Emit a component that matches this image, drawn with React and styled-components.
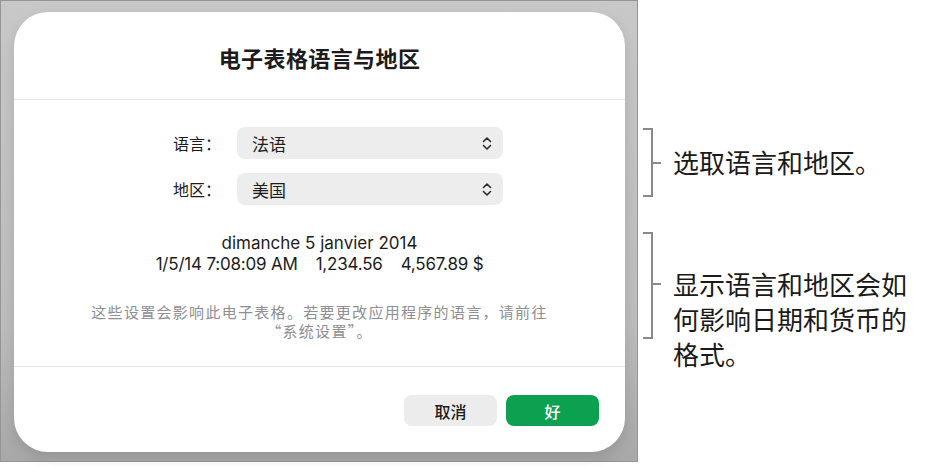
import React from "react";
import styled, { createGlobalStyle } from "styled-components";

const Global = createGlobalStyle`
  html, body { margin: 0; padding: 0; background: #ffffff; }
  body { font-family: Inter, "Noto Sans CJK SC", sans-serif; color: #1c1c1e; }
  * { box-sizing: border-box; }
`;

const Page = styled.div`
  display: flex;
  width: 934px;
  height: 466px;
  align-items: flex-start;
`;

const Frame = styled.div`
  width: 638px;
  height: 462px;
  border: 1px solid #959595;
  background: linear-gradient(180deg, #c8c8c8 0%, #bdbdbd 70%, #a8a8a8 100%);
  padding: 11px 0 0 13px;
`;

const Dialog = styled.div`
  width: 611px;
  height: 440px;
  background: #ffffff;
  border-radius: 34px;
  box-shadow: 0 6px 14px rgba(0, 0, 0, 0.12);
  display: flex;
  flex-direction: column;
`;

const Header = styled.div`
  height: 88px;
  display: flex;
  align-items: center;
  justify-content: center;
  border-bottom: 1px solid #e6e6e6;
  padding-top: 2px;
`;

const Title = styled.h1`
  margin: 0;
  font-family: "Noto Sans CJK SC", sans-serif;
  font-size: 22px;
  font-weight: 700;
  letter-spacing: 0.4px;
  color: #1c1c1e;
`;

const Body = styled.div`
  flex: 1;
  border-bottom: 1px solid #e6e6e6;
  display: flex;
  flex-direction: column;
  align-items: stretch;
  padding-top: 27px;
`;

const Form = styled.div`
  display: grid;
  grid-template-columns: 207px 266px;
  column-gap: 16px;
  row-gap: 14px;
  align-items: center;
`;

const Label = styled.div`
  text-align: right;
  font-family: "Noto Sans CJK SC", sans-serif;
  font-size: 16px;
  color: #1c1c1e;
`;

const Select = styled.div`
  height: 32px;
  border-radius: 8px;
  background: #ededed;
  display: flex;
  align-items: center;
  justify-content: space-between;
  padding: 0 11px 0 15px;
  font-family: "Noto Sans CJK SC", sans-serif;
  font-size: 17px;
  color: #1c1c1e;
`;

const Preview = styled.div`
  margin-top: 28px;
  display: flex;
  flex-direction: column;
  align-items: center;
  font-family: Inter, "Noto Sans CJK SC", sans-serif;
  font-size: 17px;
  line-height: 21px;
  color: #1c1c1e;
`;

const PreviewRow = styled.div`
  display: flex;
  gap: 18px;
  letter-spacing: -0.2px;
`;

const Note = styled.p`
  margin: 27px 0 0;
  text-align: center;
  font-family: "Noto Sans CJK SC", sans-serif;
  font-size: 15px;
  line-height: 19px;
  letter-spacing: 1.3px;
  color: #8e8e93;
`;

const Footer = styled.div`
  height: 85px;
  display: flex;
  justify-content: flex-end;
  align-items: flex-start;
  gap: 9px;
  padding: 28px 26px 0 0;
`;

const Button = styled.button`
  width: 93px;
  height: 31px;
  border: none;
  border-radius: 8px;
  font-family: "Noto Sans CJK SC", sans-serif;
  font-size: 16px;
  font-weight: 500;
  background: ${(p) => (p.$primary ? "#0ba150" : "#ececec")};
  color: ${(p) => (p.$primary ? "#ffffff" : "#1c1c1e")};
  display: flex;
  align-items: center;
  justify-content: center;
  padding: 0;
`;

const Callouts = styled.div`
  display: flex;
  flex-direction: column;
  padding: 128px 0 0 5px;
  gap: 35px;
`;

const Callout = styled.div`
  display: flex;
  align-items: flex-start;
`;

const Bracket = styled.div`
  position: relative;
  width: 10px;
  height: ${(p) => p.$h}px;
  border: 2px solid #8a8a8a;
  border-left: none;
  flex-shrink: 0;
  &::after {
    content: "";
    position: absolute;
    left: 8px;
    top: ${(p) => p.$tick}px;
    width: 10px;
    height: 2px;
    background: #8a8a8a;
  }
`;

const CalloutText = styled.div`
  margin-left: 20px;
  margin-top: ${(p) => p.$top}px;
  font-family: "Noto Sans CJK SC", sans-serif;
  font-size: 26px;
  line-height: 35px;
  color: #1a1a1a;
  width: 250px;
`;

const Chevrons = () => (
  <svg width="10" height="15" viewBox="0 0 10 15" fill="none">
    <path d="M1.5 5.5 L5 2 L8.5 5.5" stroke="#2b2b2b" strokeWidth="1.6" strokeLinecap="round" strokeLinejoin="round" />
    <path d="M1.5 9.5 L5 13 L8.5 9.5" stroke="#2b2b2b" strokeWidth="1.6" strokeLinecap="round" strokeLinejoin="round" />
  </svg>
);

export default function App() {
  return (
    <>
      <Global />
      <Page>
        <Frame>
          <Dialog>
            <Header>
              <Title>电子表格语言与地区</Title>
            </Header>
            <Body>
              <Form>
                <Label>语言：</Label>
                <Select>
                  <span>法语</span>
                  <Chevrons />
                </Select>
                <Label>地区：</Label>
                <Select>
                  <span>美国</span>
                  <Chevrons />
                </Select>
              </Form>
              <Preview>
                <div>dimanche 5 janvier 2014</div>
                <PreviewRow>
                  <span>1/5/14 7:08:09 AM</span>
                  <span>1,234.56</span>
                  <span>4,567.89 $</span>
                </PreviewRow>
              </Preview>
              <Note>
                这些设置会影响此电子表格。若要更改应用程序的语言，请前往
                <br />
                “系统设置”。
              </Note>
            </Body>
            <Footer>
              <Button>取消</Button>
              <Button $primary>好</Button>
            </Footer>
          </Dialog>
        </Frame>
        <Callouts>
          <Callout>
            <Bracket $h={69} $tick={32} />
            <CalloutText $top={16}>选取语言和地区。</CalloutText>
          </Callout>
          <Callout>
            <Bracket $h={107} $tick={49} />
            <CalloutText $top={34}>
              显示语言和地区会如
              <br />
              何影响日期和货币的
              <br />
              格式。
            </CalloutText>
          </Callout>
        </Callouts>
      </Page>
    </>
  );
}
